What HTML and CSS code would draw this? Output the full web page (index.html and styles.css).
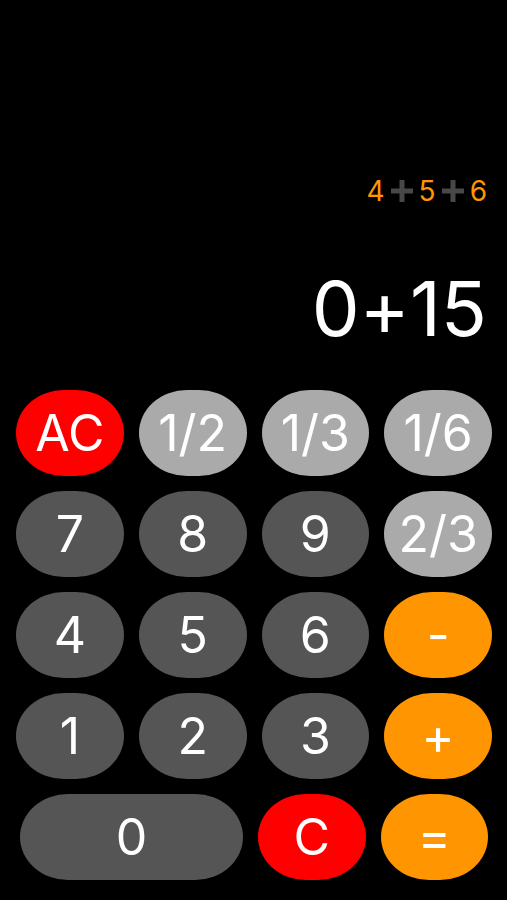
FILE: index.html
```html
<!DOCTYPE html>
<html lang="en">
<head>
<meta charset="utf-8">
<meta name="viewport" content="width=device-width, initial-scale=1">
<title>Calculator</title>
<link rel="stylesheet" href="styles.css">
</head>
<body>
<main class="calculator">

	<section class="display">
		<div class="history">
			<span>4</span>
			<svg class="plus" viewBox="0 0 22 22" role="img" aria-label="plus"><path d="M8.5 0h5v8.5H22v5h-8.5V22h-5v-8.5H0v-5h8.5z"/></svg>
			<span>5</span>
			<svg class="plus" viewBox="0 0 22 22" role="img" aria-label="plus"><path d="M8.5 0h5v8.5H22v5h-8.5V22h-5v-8.5H0v-5h8.5z"/></svg>
			<span>6</span>
		</div>
		<output class="result">0+15</output>
	</section>

	<section class="keypad">
		<div class="row">
			<button type="button" class="key clear">AC</button>
			<button type="button" class="key fraction">1/2</button>
			<button type="button" class="key fraction">1/3</button>
			<button type="button" class="key fraction">1/6</button>
		</div>
		<div class="row">
			<button type="button" class="key">7</button>
			<button type="button" class="key">8</button>
			<button type="button" class="key">9</button>
			<button type="button" class="key fraction">2/3</button>
		</div>
		<div class="row">
			<button type="button" class="key">4</button>
			<button type="button" class="key">5</button>
			<button type="button" class="key">6</button>
			<button type="button" class="key operator">-</button>
		</div>
		<div class="row">
			<button type="button" class="key">1</button>
			<button type="button" class="key">2</button>
			<button type="button" class="key">3</button>
			<button type="button" class="key operator">+</button>
		</div>
		<div class="row last">
			<button type="button" class="key wide">0</button>
			<button type="button" class="key clear">C</button>
			<button type="button" class="key operator">=</button>
		</div>
	</section>

</main>
</body>
</html>
```

FILE: styles.css
```css
* {
	box-sizing: border-box;
}
body {
	margin: 0;
	background: #000;
	color: #fff;
	font-family: Inter, Roboto, "Liberation Sans", sans-serif;
	/* keep + and - at their lowercase height next to digits */
	font-feature-settings: "calt" 0;
}
.calculator {
	display: flex;
	flex-direction: column;
	justify-content: flex-end;
	gap: 36px;
	min-height: 100vh;
	padding: 20px 15px 20px 16px;
}

/* display */

.display {
	display: flex;
	flex-direction: column;
	align-items: flex-end;
	gap: 55px;
	padding-right: 5px;
}
.history {
	display: flex;
	align-items: center;
	gap: 6px;
	color: #ff9500;
	font-size: 28px;
	line-height: 32px;
}
.plus {
	width: 22px;
	height: 22px;
	fill: #484848;
}
.result {
	font-size: 76px;
	line-height: 92px;
}

/* keypad */

.keypad {
	display: flex;
	flex-direction: column;
	gap: 15px;
}
.row {
	display: flex;
	gap: 15px;
}
.row.last {
	padding: 0 4px;
}
.key {
	flex: 1 1 0;
	min-width: 0;
	height: 86px;
	padding: 0;
	border: 0;
	border-radius: 48px / 43px;
	background: #555;
	color: inherit;
	font: inherit;
	font-feature-settings: inherit;
	font-size: 50px;
	cursor: pointer;
}
.key.wide {
	flex: 2 1 8px;
}
.key.clear {
	background: #f00;
}
.key.fraction {
	background: #aaa;
}
.key.operator {
	background: #ff9500;
}
```
